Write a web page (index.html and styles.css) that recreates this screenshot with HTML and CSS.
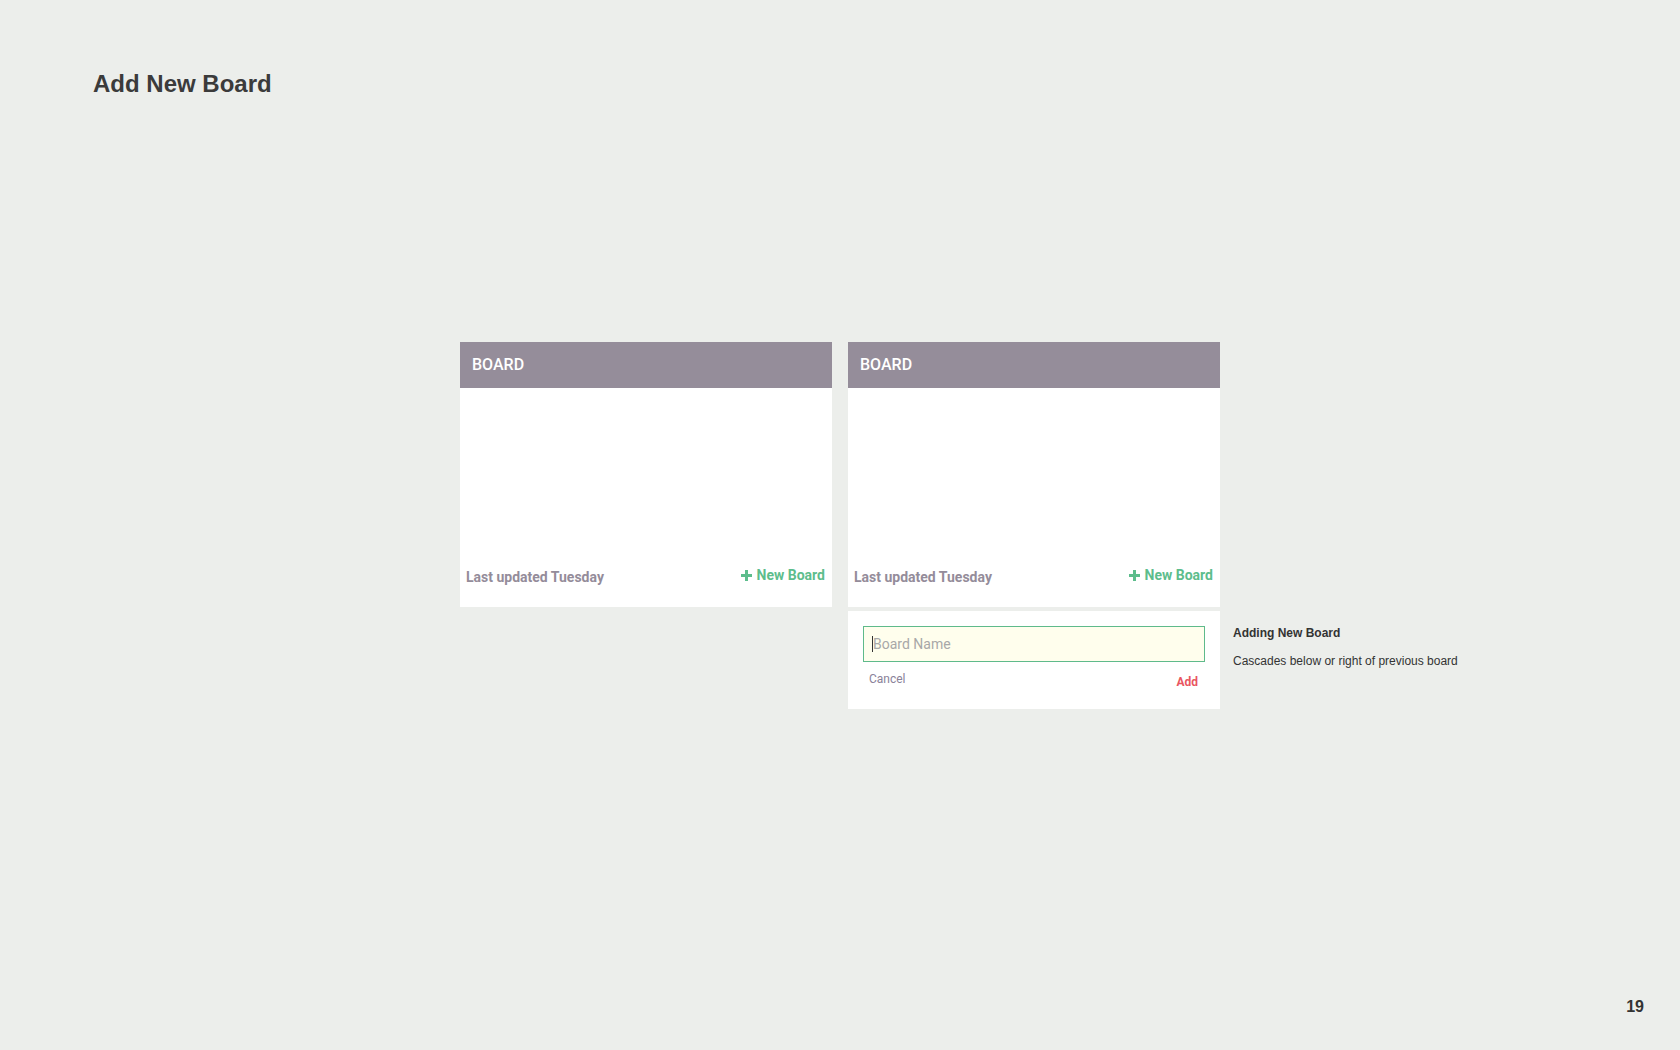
FILE: index.html
```html
<!DOCTYPE html>
<html lang="en">
<head>
<meta charset="utf-8">
<title>Add New Board</title>
<link rel="stylesheet" href="styles.css">
</head>
<body>
<div class="page">
  <h1 class="page-title">Add New Board</h1>

  <div class="boards">
    <section class="board board-a">
      <header class="board-header">BOARD</header>
      <div class="board-body"></div>
      <footer class="board-footer">
        <span class="updated">Last updated Tuesday</span>
        <a class="new-board" href="#"><svg class="plus" viewBox="0 0 11 11" width="11" height="11"><rect x="4" y="0" width="3" height="11" fill="currentColor"/><rect x="0" y="4" width="11" height="3" fill="currentColor"/></svg>New Board</a>
      </footer>
    </section>

    <section class="board board-b">
      <header class="board-header">BOARD</header>
      <div class="board-body"></div>
      <footer class="board-footer">
        <span class="updated">Last updated Tuesday</span>
        <a class="new-board" href="#"><svg class="plus" viewBox="0 0 11 11" width="11" height="11"><rect x="4" y="0" width="3" height="11" fill="currentColor"/><rect x="0" y="4" width="11" height="3" fill="currentColor"/></svg>New Board</a>
      </footer>
    </section>

    <form class="add-form">
      <div class="field">
        <input class="name-input" type="text" placeholder="Board Name">
        <span class="caret"></span>
      </div>
      <div class="form-actions">
        <a class="cancel" href="#">Cancel</a>
        <a class="add" href="#">Add</a>
      </div>
    </form>

    <aside class="note">
      <h2 class="note-title">Adding New Board</h2>
      <p class="note-text">Cascades below or right of previous board</p>
    </aside>
  </div>

  <footer class="page-footer">19</footer>
</div>
</body>
</html>
```

FILE: styles.css
```css
* { box-sizing: border-box; }

html, body {
  margin: 0;
  padding: 0;
  background: #eceeeb;
}

.page {
  min-height: 1050px;
  display: flex;
  flex-direction: column;
  font-family: "Liberation Sans", Arial, sans-serif;
}

.page-title {
  margin: 0;
  padding: 70px 0 0 93px;
  font-size: 24px;
  line-height: 28px;
  font-weight: 700;
  color: #3b3b3b;
}

.boards {
  margin-top: 244px;
  display: grid;
  grid-template-columns: 1fr 372px 16px 372px 1fr;
  grid-template-rows: auto auto;
  row-gap: 4px;
  font-family: Roboto, "Noto Sans", sans-serif;
}

.board {
  height: 265px;
  background: #ffffff;
  display: flex;
  flex-direction: column;
}

.board-a { grid-column: 2; grid-row: 1; }
.board-b { grid-column: 4; grid-row: 1; }

.board-header {
  height: 46px;
  background: #958d9a;
  color: #ffffff;
  font-size: 16px;
  font-weight: 500;
  display: flex;
  align-items: center;
  padding-left: 12px;
  padding-bottom: 1px;
}

.board-body { flex: 1; }

.board-footer {
  display: flex;
  justify-content: space-between;
  align-items: flex-end;
  padding: 0 7px 21px 6px;
  font-size: 14px;
  line-height: 17px;
  font-weight: 700;
}

.updated { color: #948c9a; }

.new-board {
  color: #5dbd8c;
  text-decoration: none;
  display: flex;
  align-items: center;
  gap: 5px;
  padding-bottom: 2px;
}

.plus { display: block; margin-top: -1px; }

.add-form {
  grid-column: 4;
  grid-row: 2;
  margin: 0;
  background: #ffffff;
  padding: 15px 15px 20px 15px;
}

.field { position: relative; }

.name-input {
  display: block;
  width: 100%;
  height: 36px;
  margin: 0;
  border: 1px solid #5fba8b;
  background: #fffeed;
  padding: 0 0 0 9px;
  font-family: Roboto, "Noto Sans", sans-serif;
  font-size: 14px;
  color: #333;
  outline: none;
}

.name-input::placeholder { color: #a8a8a8; }

.caret {
  position: absolute;
  left: 9px;
  top: 10px;
  width: 1px;
  height: 16px;
  background: #333;
}

.form-actions {
  display: flex;
  justify-content: space-between;
  align-items: flex-start;
  margin-top: 10px;
  font-size: 12px;
  line-height: 14px;
}

.cancel {
  color: #8a8299;
  text-decoration: none;
  padding-left: 6px;
}

.add {
  color: #e9555f;
  font-weight: 700;
  text-decoration: none;
  padding: 3px 7px 0 0;
}

.note {
  grid-column: 5;
  grid-row: 2;
  padding: 15px 0 0 13px;
  font-family: "Liberation Sans", Arial, sans-serif;
  color: #333333;
}

.note-title {
  margin: 0;
  font-size: 12px;
  line-height: 14px;
  font-weight: 700;
}

.note-text {
  margin: 14px 0 0 0;
  font-size: 12px;
  line-height: 14px;
}

.page-footer {
  margin-top: auto;
  text-align: right;
  padding: 0 36px 34px 0;
  font-size: 16px;
  line-height: 18px;
  font-weight: 700;
  color: #333333;
}
```
